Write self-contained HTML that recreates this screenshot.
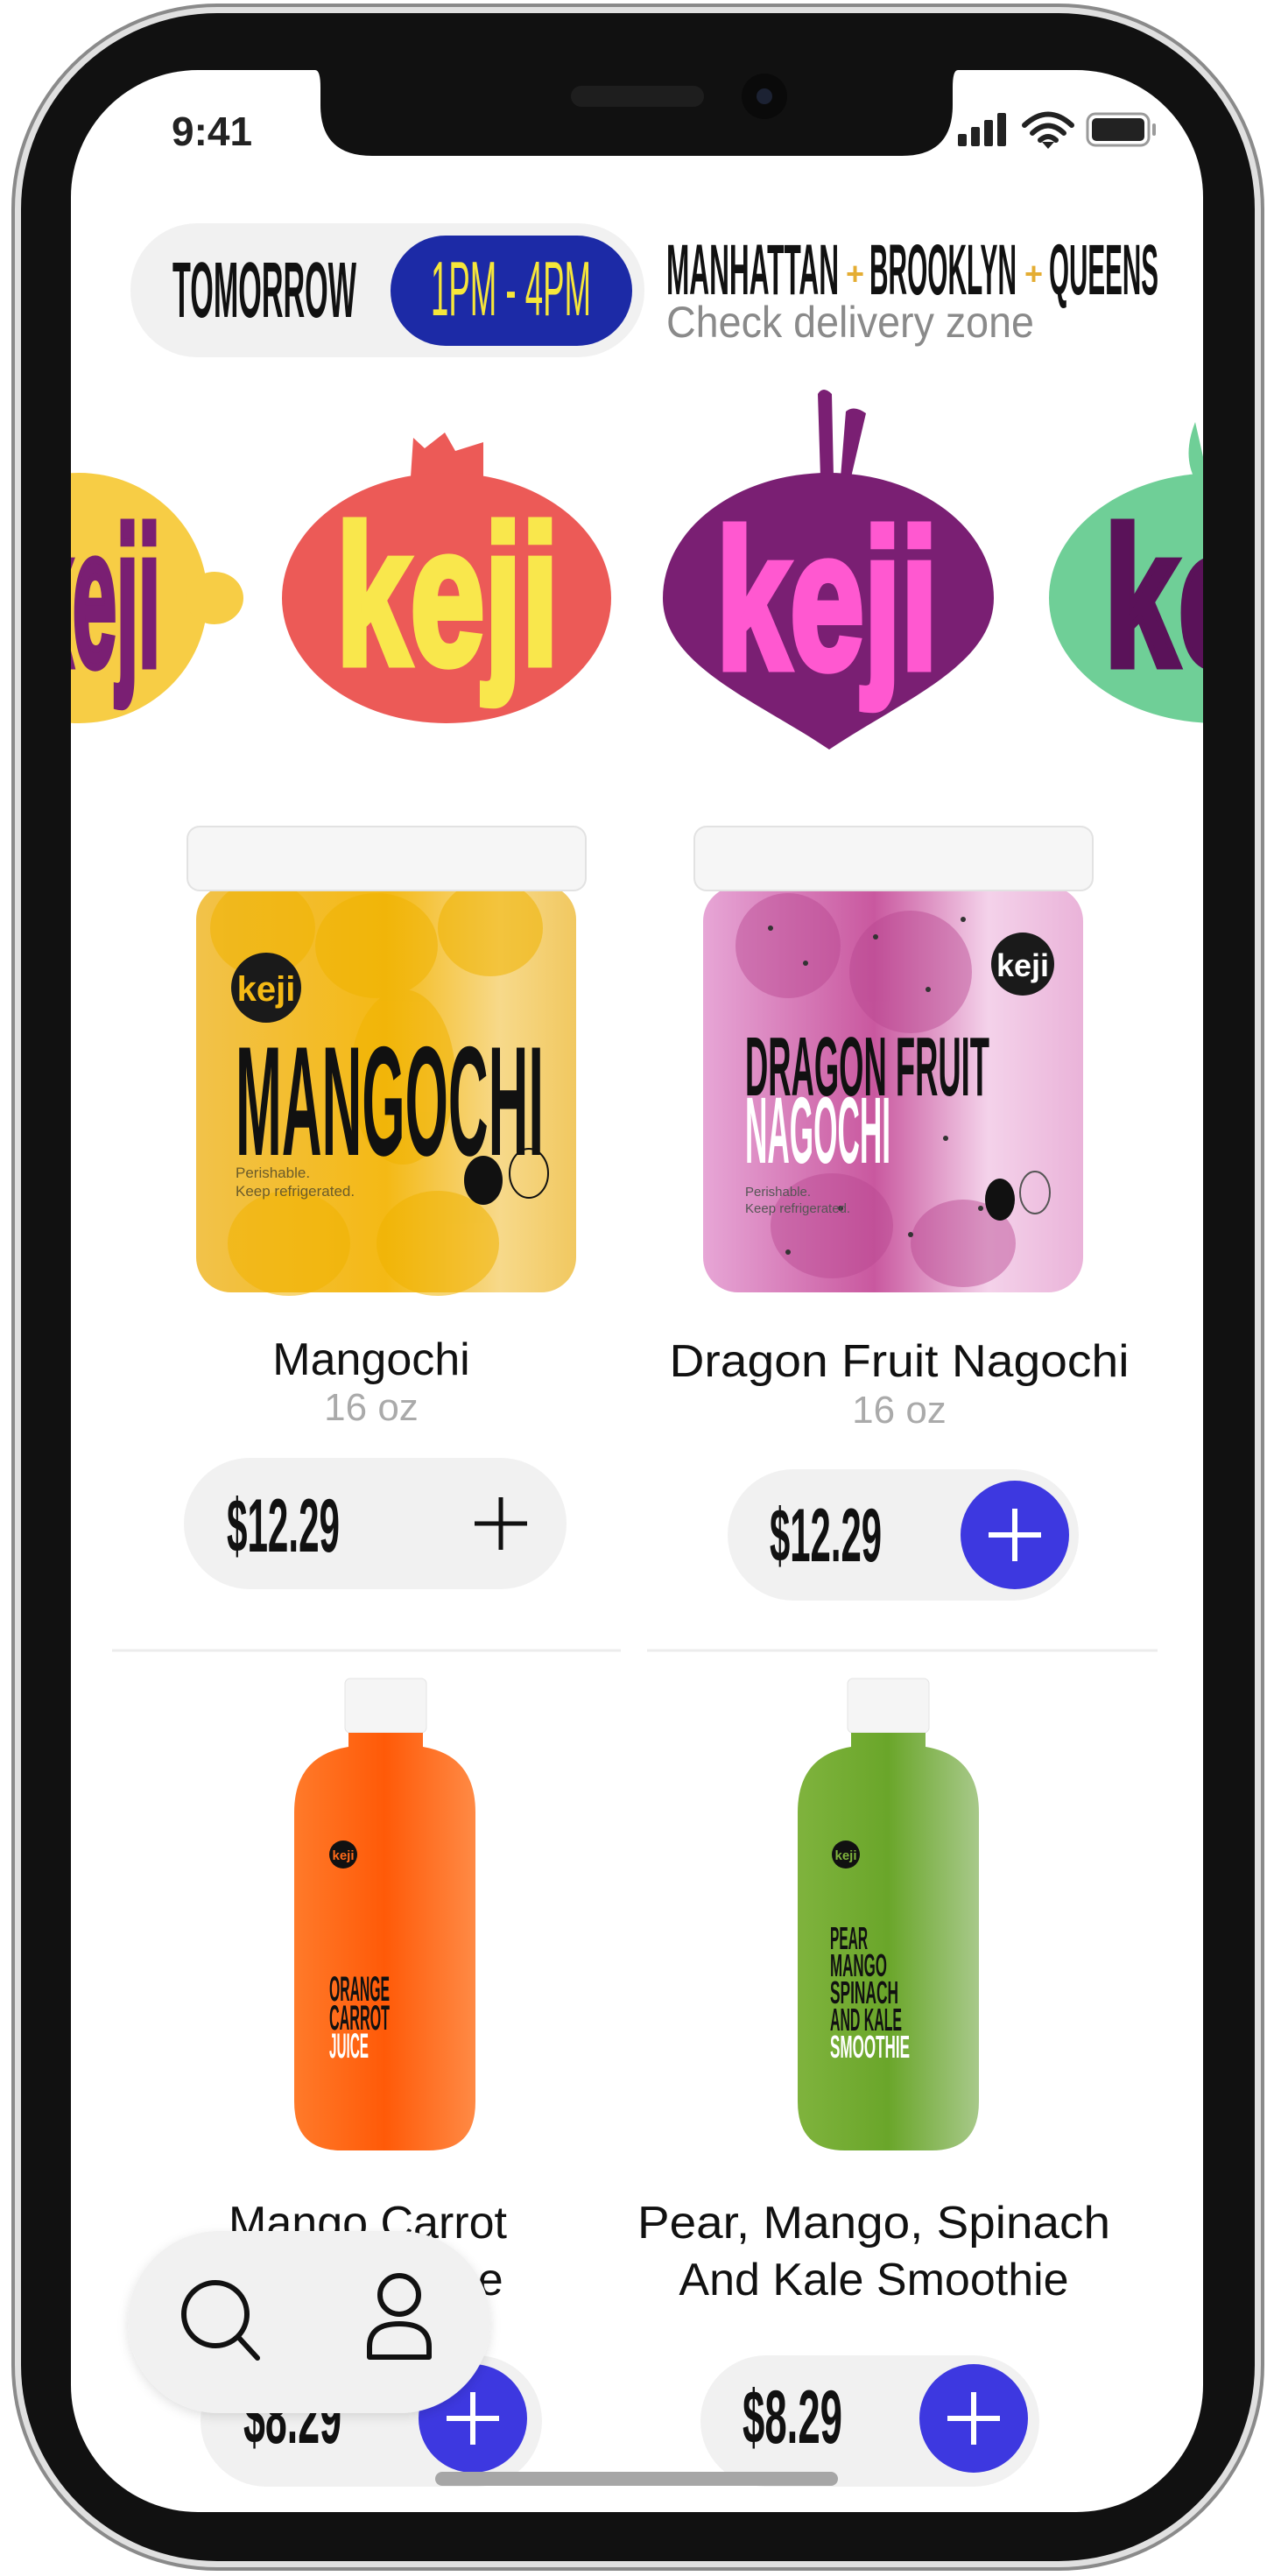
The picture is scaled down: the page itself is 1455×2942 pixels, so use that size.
<!DOCTYPE html>
<html><head><meta charset="utf-8"><style>
html,body{margin:0;padding:0;background:#fff;}
svg{display:block;}
text{font-family:"Liberation Sans",sans-serif;}
</style></head><body>
<svg width="1455" height="2942" viewBox="0 0 1455 2942" xmlns="http://www.w3.org/2000/svg">
<defs>
<clipPath id="scr"><rect x="81" y="80" width="1293" height="2789" rx="145"/></clipPath>
<linearGradient id="jy" x1="0" x2="1"><stop offset="0" stop-color="#f2c24a"/><stop offset=".5" stop-color="#f4b915"/><stop offset=".8" stop-color="#f7d98a"/><stop offset="1" stop-color="#f1c860"/></linearGradient>
<linearGradient id="jp" x1="0" x2="1"><stop offset="0" stop-color="#e7a6d6"/><stop offset=".45" stop-color="#c9589f"/><stop offset=".75" stop-color="#f4d2ea"/><stop offset="1" stop-color="#eab3d9"/></linearGradient>
<linearGradient id="bo" x1="0" x2="1"><stop offset="0" stop-color="#ff7a2a"/><stop offset=".5" stop-color="#ff5a08"/><stop offset="1" stop-color="#ff8a45"/></linearGradient>
<linearGradient id="bg" x1="0" x2="1"><stop offset="0" stop-color="#7fb33d"/><stop offset=".5" stop-color="#6aa62a"/><stop offset="1" stop-color="#a8c98a"/></linearGradient>
<filter id="sh" x="-10%" y="-10%" width="120%" height="130%"><feDropShadow dx="0" dy="4" stdDeviation="6" flood-opacity=".12"/></filter>
</defs>
<!-- phone frame -->
<rect x="13" y="4" width="1431" height="2932" rx="235" fill="#8a8a8a"/>
<rect x="17" y="8" width="1423" height="2924" rx="231" fill="#e0e0e0"/>
<rect x="24" y="15" width="1409" height="2910" rx="224" fill="#111"/>
<rect x="81" y="80" width="1293" height="2789" rx="145" fill="#fff"/>
<g clip-path="url(#scr)">
<!-- header -->
<rect x="149" y="255" width="587" height="153" rx="76" fill="#f1f1f1"/>
<text x="197" y="362" font-size="90" font-weight="bold" textLength="210" lengthAdjust="spacingAndGlyphs" fill="#111">TOMORROW</text>
<rect x="446" y="269" width="276" height="126" rx="63" fill="#1c2aa6"/>
<text x="492" y="360" font-size="88" textLength="183" lengthAdjust="spacingAndGlyphs" fill="#f6e63a">1PM - 4PM</text>
<text x="761" y="336" font-size="82" font-weight="bold" textLength="197" lengthAdjust="spacingAndGlyphs" fill="#111">MANHATTAN</text>
<text x="966" y="325" font-size="36" font-weight="bold" fill="#e4ad33">+</text>
<text x="993" y="336" font-size="82" font-weight="bold" textLength="168" lengthAdjust="spacingAndGlyphs" fill="#111">BROOKLYN</text>
<text x="1170" y="325" font-size="36" font-weight="bold" fill="#e4ad33">+</text>
<text x="1198" y="336" font-size="82" font-weight="bold" textLength="125" lengthAdjust="spacingAndGlyphs" fill="#111">QUEENS</text>
<text x="761" y="385" font-size="50" textLength="420" lengthAdjust="spacingAndGlyphs" fill="#8a8a8a">Check delivery zone</text>
<!-- fruits -->
<ellipse cx="90" cy="683" rx="147" ry="143" fill="#f7cd45"/>
<ellipse cx="245" cy="683" rx="33" ry="30" fill="#f7cd45"/>
<text x="183" y="760" font-size="225" font-weight="bold" text-anchor="end" textLength="150" lengthAdjust="spacingAndGlyphs" fill="#7a1f73" stroke="#7a1f73" stroke-width="9">keji</text>
<path d="M469 545 L472 500 L485 512 L508 494 L520 515 L552 505 L552 545 Z" fill="#ec5a57"/>
<ellipse cx="510" cy="683" rx="188" ry="143" fill="#ec5a57"/>
<text x="384" y="758" font-size="225" font-weight="bold" textLength="254" lengthAdjust="spacingAndGlyphs" fill="#f9e74c" stroke="#f9e74c" stroke-width="9">keji</text>
<path d="M934 450 Q940 440 950 450 L952 545 L937 545 Z M966 470 Q975 462 989 472 L972 545 L960 545 Z" fill="#7a1f73"/>
<path d="M757 683 A189 143 0 0 1 1135 683 C1135 760 1030 800 947 856 C864 800 757 760 757 683 Z" fill="#7a1f73"/>
<text x="818" y="763" font-size="225" font-weight="bold" textLength="253" lengthAdjust="spacingAndGlyphs" fill="#ff58d0" stroke="#ff58d0" stroke-width="9">keji</text>
<path d="M1365 482 Q1350 520 1365 548 L1380 548 Z" fill="#6fcf97"/>
<ellipse cx="1390" cy="683" rx="192" ry="143" fill="#6fcf97"/>
<text x="1261" y="760" font-size="225" font-weight="bold" textLength="254" lengthAdjust="spacingAndGlyphs" fill="#5a1259" stroke="#5a1259" stroke-width="9">keji</text>
<!-- jar 1 -->
<rect x="224" y="1010" width="434" height="466" rx="40" fill="url(#jy)"/>
<g fill="#f0b300" opacity=".55"><ellipse cx="300" cy="1060" rx="60" ry="55"/><ellipse cx="430" cy="1080" rx="70" ry="60"/><ellipse cx="560" cy="1060" rx="60" ry="55"/><ellipse cx="460" cy="1230" rx="60" ry="100"/><ellipse cx="330" cy="1420" rx="70" ry="60"/><ellipse cx="500" cy="1420" rx="70" ry="60"/></g>
<rect x="214" y="944" width="455" height="73" rx="14" fill="#f6f6f6" stroke="#e2e2e2" stroke-width="2"/>
<circle cx="304" cy="1128" r="40" fill="#1a1a1a"/>
<text x="304" y="1143" font-size="40" font-weight="bold" text-anchor="middle" fill="#f4b915">keji</text>
<text x="269" y="1319" font-size="178" font-weight="bold" textLength="352" lengthAdjust="spacingAndGlyphs" fill="#111">MANGOCHI</text>
<text x="269" y="1345" font-size="17" fill="#6b5b2a">Perishable.</text>
<text x="269" y="1366" font-size="17" fill="#6b5b2a">Keep refrigerated.</text>
<ellipse cx="552" cy="1348" rx="22" ry="28" fill="#111"/><ellipse cx="604" cy="1340" rx="22" ry="28" fill="none" stroke="#111" stroke-width="2"/>
<!-- jar 2 -->
<rect x="803" y="1012" width="434" height="464" rx="40" fill="url(#jp)"/>
<g fill="#b84690" opacity=".45"><ellipse cx="900" cy="1080" rx="60" ry="60"/><ellipse cx="1040" cy="1110" rx="70" ry="70"/><ellipse cx="950" cy="1400" rx="70" ry="60"/><ellipse cx="1100" cy="1420" rx="60" ry="50"/></g>
<g fill="#333"><circle cx="880" cy="1060" r="3"/><circle cx="920" cy="1100" r="3"/><circle cx="1000" cy="1070" r="3"/><circle cx="1060" cy="1130" r="3"/><circle cx="1100" cy="1050" r="3"/><circle cx="960" cy="1380" r="3"/><circle cx="1040" cy="1410" r="3"/><circle cx="1120" cy="1380" r="3"/><circle cx="900" cy="1430" r="3"/><circle cx="1080" cy="1300" r="3"/></g>
<rect x="793" y="944" width="455" height="73" rx="14" fill="#f6f6f6" stroke="#e2e2e2" stroke-width="2"/>
<circle cx="1168" cy="1101" r="36" fill="#1a1a1a"/>
<text x="1168" y="1115" font-size="36" font-weight="bold" text-anchor="middle" fill="#fff">keji</text>
<text x="851" y="1251" font-size="96" font-weight="bold" textLength="279" lengthAdjust="spacingAndGlyphs" fill="#111">DRAGON FRUIT</text>
<text x="851" y="1328" font-size="108" font-weight="bold" textLength="166" lengthAdjust="spacingAndGlyphs" fill="#fff">NAGOCHI</text>
<text x="851" y="1366" font-size="15" fill="#555">Perishable.</text>
<text x="851" y="1385" font-size="15" fill="#555">Keep refrigerated.</text>
<ellipse cx="1142" cy="1370" rx="17" ry="24" fill="#111"/><ellipse cx="1182" cy="1362" rx="17" ry="24" fill="none" stroke="#555" stroke-width="2"/>
<!-- names row1 -->
<text x="424" y="1570" font-size="52" text-anchor="middle" fill="#111">Mangochi</text>
<text x="424" y="1622" font-size="44" text-anchor="middle" fill="#aaa">16 oz</text>
<text x="1027" y="1572" font-size="52" text-anchor="middle" textLength="525" lengthAdjust="spacingAndGlyphs" fill="#111">Dragon Fruit Nagochi</text>
<text x="1027" y="1625" font-size="44" text-anchor="middle" fill="#aaa">16 oz</text>
<!-- price row1 -->
<rect x="210" y="1665" width="437" height="150" rx="75" fill="#f1f1f1"/>
<text x="259" y="1772" font-size="86" font-weight="bold" textLength="129" lengthAdjust="spacingAndGlyphs" fill="#111">$12.29</text>
<path d="M572 1710 V1770 M542 1740 H602" stroke="#111" stroke-width="5"/>
<rect x="831" y="1678" width="401" height="150" rx="75" fill="#f1f1f1"/>
<text x="879" y="1783" font-size="86" font-weight="bold" textLength="128" lengthAdjust="spacingAndGlyphs" fill="#111">$12.29</text>
<circle cx="1159" cy="1753" r="62" fill="#3d38e0"/>
<path d="M1159 1723 V1783 M1129 1753 H1189" stroke="#fff" stroke-width="6"/>
<path d="M128 1885 H709 M739 1885 H1322" stroke="#ececec" stroke-width="3"/>
<!-- bottle 1 -->
<rect x="394" y="1917" width="93" height="62" rx="6" fill="#f5f5f5" stroke="#e3e3e3"/>
<path d="M398 1979 H483 L483 1995 Q543 2005 543 2070 V2400 Q543 2456 490 2456 H390 Q336 2456 336 2400 V2070 Q336 2005 398 1995 Z" fill="url(#bo)"/>
<circle cx="392" cy="2118" r="16" fill="#111"/><text x="392" y="2124" font-size="15" font-weight="bold" text-anchor="middle" fill="#ff6a1a">keji</text>
<text x="376" y="2285" font-size="40" font-weight="bold" textLength="69" lengthAdjust="spacingAndGlyphs" fill="#111">ORANGE</text>
<text x="376" y="2318" font-size="40" font-weight="bold" textLength="69" lengthAdjust="spacingAndGlyphs" fill="#111">CARROT</text>
<text x="376" y="2350" font-size="40" font-weight="bold" textLength="45" lengthAdjust="spacingAndGlyphs" fill="#fff">JUICE</text>
<!-- bottle 2 -->
<rect x="968" y="1917" width="93" height="62" rx="6" fill="#f5f5f5" stroke="#e3e3e3"/>
<path d="M972 1979 H1057 L1057 1995 Q1118 2005 1118 2070 V2400 Q1118 2456 1064 2456 H965 Q911 2456 911 2400 V2070 Q911 2005 972 1995 Z" fill="url(#bg)"/>
<circle cx="966" cy="2118" r="16" fill="#111"/><text x="966" y="2124" font-size="15" font-weight="bold" text-anchor="middle" fill="#7fb33d">keji</text>
<text x="948" y="2226" font-size="36" font-weight="bold" textLength="43" lengthAdjust="spacingAndGlyphs" fill="#111">PEAR</text>
<text x="948" y="2257" font-size="36" font-weight="bold" textLength="65" lengthAdjust="spacingAndGlyphs" fill="#111">MANGO</text>
<text x="948" y="2288" font-size="36" font-weight="bold" textLength="78" lengthAdjust="spacingAndGlyphs" fill="#111">SPINACH</text>
<text x="948" y="2319" font-size="36" font-weight="bold" textLength="82" lengthAdjust="spacingAndGlyphs" fill="#111">AND KALE</text>
<text x="948" y="2350" font-size="36" font-weight="bold" textLength="91" lengthAdjust="spacingAndGlyphs" fill="#fff">SMOOTHIE</text>
<!-- names row2 -->
<text x="420" y="2556" font-size="52" text-anchor="middle" fill="#111">Mango Carrot</text>
<text x="420" y="2621" font-size="52" text-anchor="middle" fill="#111">Orange Juice</text>
<text x="998" y="2556" font-size="52" text-anchor="middle" textLength="540" lengthAdjust="spacingAndGlyphs" fill="#111">Pear, Mango, Spinach</text>
<text x="998" y="2621" font-size="52" text-anchor="middle" fill="#111">And Kale Smoothie</text>
<!-- price row2 -->
<rect x="229" y="2690" width="390" height="150" rx="75" fill="#f1f1f1"/>
<text x="278" y="2790" font-size="86" font-weight="bold" textLength="112" lengthAdjust="spacingAndGlyphs" fill="#111">$8.29</text>
<circle cx="540" cy="2762" r="62" fill="#3d38e0"/>
<path d="M540 2732 V2792 M510 2762 H570" stroke="#fff" stroke-width="6"/>
<rect x="800" y="2690" width="387" height="150" rx="75" fill="#f1f1f1"/>
<text x="848" y="2790" font-size="86" font-weight="bold" textLength="114" lengthAdjust="spacingAndGlyphs" fill="#111">$8.29</text>
<circle cx="1112" cy="2762" r="62" fill="#3d38e0"/>
<path d="M1112 2732 V2792 M1082 2762 H1142" stroke="#fff" stroke-width="6"/>
<!-- nav pill -->
<rect x="146" y="2548" width="414" height="208" rx="104" fill="#f1f1f1" filter="url(#sh)"/>
<circle cx="246" cy="2643" r="36" fill="none" stroke="#111" stroke-width="6"/>
<path d="M272 2669 L294 2693" stroke="#111" stroke-width="6" stroke-linecap="round"/>
<circle cx="456" cy="2621" r="22" fill="none" stroke="#111" stroke-width="6"/>
<path d="M422 2692 V2680 Q422 2654 456 2654 Q490 2654 490 2680 V2692 Z" fill="none" stroke="#111" stroke-width="6" stroke-linejoin="round"/>
<rect x="497" y="2823" width="460" height="16" rx="8" fill="#a6a6a6"/>
</g>
<!-- notch -->
<path d="M360 80 H1094 Q1088 80 1088 100 V120 Q1088 178 1030 178 H425 Q366 178 366 120 V100 Q366 80 360 80 Z" fill="#111"/>
<rect x="652" y="98" width="152" height="24" rx="12" fill="#1e1e1e"/>
<circle cx="873" cy="110" r="26" fill="#0a0a0a"/><circle cx="873" cy="110" r="9" fill="#1c2233"/>
<!-- status bar -->
<text x="196" y="166" font-size="46" font-weight="bold" fill="#222">9:41</text>
<g fill="#222"><rect x="1094" y="153" width="10" height="14" rx="2"/><rect x="1109" y="145" width="10" height="22" rx="2"/><rect x="1124" y="137" width="10" height="30" rx="2"/><rect x="1139" y="129" width="10" height="38" rx="2"/></g>
<path d="M1170 143 Q1197 118 1224 143 M1179 152 Q1197 135 1215 152 M1188 160 Q1197 152 1206 160" stroke="#222" stroke-width="6" fill="none" stroke-linecap="round"/>
<path d="M1190 162 L1197 170 L1204 162 Z" fill="#222"/>
<rect x="1242" y="130" width="70" height="36" rx="9" fill="none" stroke="#9a9a9a" stroke-width="3"/>
<rect x="1247" y="135" width="60" height="26" rx="5" fill="#222"/>
<rect x="1316" y="141" width="4" height="14" rx="2" fill="#9a9a9a"/>
</svg>
</body></html>
